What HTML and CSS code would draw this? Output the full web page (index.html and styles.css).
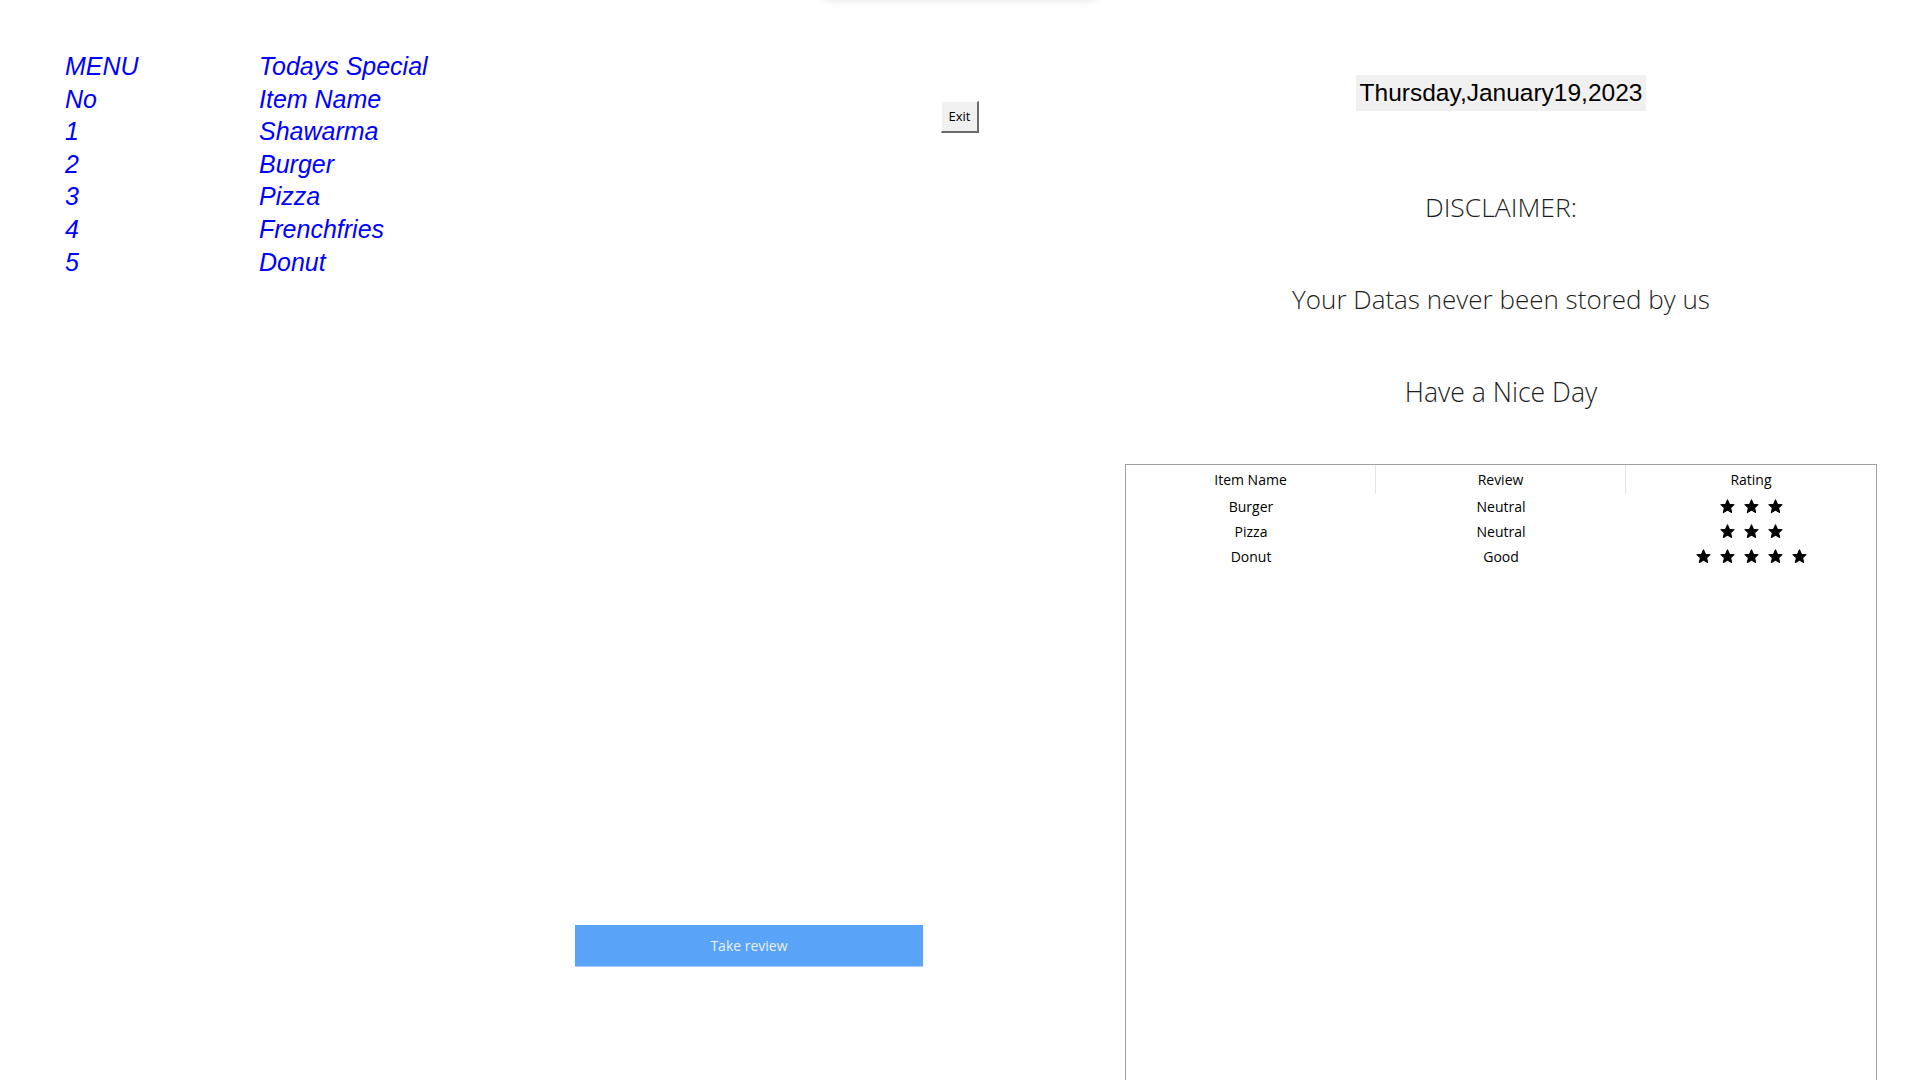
FILE: index.html
```html
<!DOCTYPE html>
<html lang="en">
<head>
<meta charset="utf-8">
<title>Menu</title>
<link rel="stylesheet" href="styles.css">
</head>
<body>
<div class="top-shadow"></div>
<div class="app">
  <section class="left">
    <div class="top">
      <div class="menu">
        <span>MENU</span><span>Todays Special</span>
        <span>No</span><span>Item Name</span>
        <span>1</span><span>Shawarma</span>
        <span>2</span><span>Burger</span>
        <span>3</span><span>Pizza</span>
        <span>4</span><span>Frenchfries</span>
        <span>5</span><span>Donut</span>
      </div>
      <button class="exit">Exit</button>
    </div>
    <button class="review-btn">Take review</button>
  </section>
  <section class="right">
    <div class="date">Thursday,January19,2023</div>
    <div class="msg msg-title">DISCLAIMER:</div>
    <div class="msg msg-first">Your Datas never been stored by us</div>
    <div class="msg msg-last">Have a Nice Day</div>
    <div class="table">
      <div class="thead">
        <div class="th">Item Name</div>
        <div class="th">Review</div>
        <div class="th">Rating</div>
      </div>
      <div class="tr">
        <div class="td">Burger</div>
        <div class="td">Neutral</div>
        <div class="td stars">
          <svg class="star" viewBox="0 0 24 24"><path d="M12 1.5l3.1 6.9 7.4.7-5.6 5 1.7 7.4L12 17.6l-6.6 3.9 1.7-7.4-5.6-5 7.4-.7z"/></svg>
          <svg class="star" viewBox="0 0 24 24"><path d="M12 1.5l3.1 6.9 7.4.7-5.6 5 1.7 7.4L12 17.6l-6.6 3.9 1.7-7.4-5.6-5 7.4-.7z"/></svg>
          <svg class="star" viewBox="0 0 24 24"><path d="M12 1.5l3.1 6.9 7.4.7-5.6 5 1.7 7.4L12 17.6l-6.6 3.9 1.7-7.4-5.6-5 7.4-.7z"/></svg>
        </div>
      </div>
      <div class="tr">
        <div class="td">Pizza</div>
        <div class="td">Neutral</div>
        <div class="td stars">
          <svg class="star" viewBox="0 0 24 24"><path d="M12 1.5l3.1 6.9 7.4.7-5.6 5 1.7 7.4L12 17.6l-6.6 3.9 1.7-7.4-5.6-5 7.4-.7z"/></svg>
          <svg class="star" viewBox="0 0 24 24"><path d="M12 1.5l3.1 6.9 7.4.7-5.6 5 1.7 7.4L12 17.6l-6.6 3.9 1.7-7.4-5.6-5 7.4-.7z"/></svg>
          <svg class="star" viewBox="0 0 24 24"><path d="M12 1.5l3.1 6.9 7.4.7-5.6 5 1.7 7.4L12 17.6l-6.6 3.9 1.7-7.4-5.6-5 7.4-.7z"/></svg>
        </div>
      </div>
      <div class="tr">
        <div class="td">Donut</div>
        <div class="td">Good</div>
        <div class="td stars">
          <svg class="star" viewBox="0 0 24 24"><path d="M12 1.5l3.1 6.9 7.4.7-5.6 5 1.7 7.4L12 17.6l-6.6 3.9 1.7-7.4-5.6-5 7.4-.7z"/></svg>
          <svg class="star" viewBox="0 0 24 24"><path d="M12 1.5l3.1 6.9 7.4.7-5.6 5 1.7 7.4L12 17.6l-6.6 3.9 1.7-7.4-5.6-5 7.4-.7z"/></svg>
          <svg class="star" viewBox="0 0 24 24"><path d="M12 1.5l3.1 6.9 7.4.7-5.6 5 1.7 7.4L12 17.6l-6.6 3.9 1.7-7.4-5.6-5 7.4-.7z"/></svg>
          <svg class="star" viewBox="0 0 24 24"><path d="M12 1.5l3.1 6.9 7.4.7-5.6 5 1.7 7.4L12 17.6l-6.6 3.9 1.7-7.4-5.6-5 7.4-.7z"/></svg>
          <svg class="star" viewBox="0 0 24 24"><path d="M12 1.5l3.1 6.9 7.4.7-5.6 5 1.7 7.4L12 17.6l-6.6 3.9 1.7-7.4-5.6-5 7.4-.7z"/></svg>
        </div>
      </div>
    </div>
  </section>
</div>
</body>
</html>
```
FILE: styles.css
```css
html, body {
  margin: 0;
  padding: 0;
  background: #ffffff;
  width: 1920px;
  height: 1080px;
  overflow: hidden;
}

body {
  position: relative;
  font-family: "Open Sans", "Noto Sans", sans-serif;
}

.top-shadow {
  position: absolute;
  top: -20px;
  left: 822px;
  width: 276px;
  height: 20px;
  border-radius: 0 0 12px 12px;
  box-shadow: 0 1px 8px rgba(0, 0, 0, 0.10);
}

.app {
  display: grid;
  grid-template-columns: 1125px 752px;
  height: 1080px;
}

/* ---------- left ---------- */
.left {
  display: flex;
  flex-direction: column;
  align-items: flex-start;
}

.top {
  display: flex;
  align-items: flex-start;
  padding-top: 50px;
  padding-left: 65px;
}

.menu {
  width: 876px;
  display: grid;
  grid-template-columns: 194px auto;
  font-family: "Liberation Sans", Arial, sans-serif;
  font-style: italic;
  font-size: 25px;
  line-height: 32.6px;
  color: #0000ff;
}

.exit {
  margin-top: 51px;
  width: 38px;
  height: 32px;
  padding: 0 0 2px;
  background: #f0f0f0;
  border-style: solid;
  border-width: 1px 2px 2px 1px;
  border-color: #ffffff #6b6b6b #6b6b6b #ffffff;
  font-family: "Open Sans", "Noto Sans", sans-serif;
  font-size: 13px;
  color: #000;
}

.review-btn {
  margin-top: 647px;
  margin-left: 575px;
  width: 348px;
  height: 42px;
  background: #59a3f8;
  border: none;
  border-bottom: 1px solid #a9cffb;
  color: #e9f1fe;
  font-family: "Open Sans", "Noto Sans", sans-serif;
  font-size: 14px;
  padding: 0;
}

/* ---------- right ---------- */
.right {
  display: flex;
  flex-direction: column;
  align-items: center;
}

.date {
  margin-top: 75px;
  height: 36px;
  line-height: 36px;
  padding: 0 4px;
  background: #f0f0f0;
  font-family: "Liberation Sans", Arial, sans-serif;
  font-size: 24.5px;
  color: #000;
}

.msg {
  margin-top: 53px;
  height: 40px;
  line-height: 40px;
  font-family: "Open Sans", "Noto Sans", sans-serif;
  font-weight: 300;
  font-size: 26px;
  color: #1e1e1e;
  white-space: nowrap;
}

.msg-title {
  margin-top: 76px;
  font-size: 26.5px;
}

.msg-first {
  margin-top: 52px;
}

.msg-last {
  font-size: 26.6px;
}

.table {
  margin-top: 52px;
  width: 752px;
  box-sizing: border-box;
  flex: 1;
  border: 1px solid #a0a0a0;
  border-bottom: none;
  font-family: "Open Sans", "Noto Sans", sans-serif;
  font-size: 14px;
  color: #000;
}

.thead, .tr {
  display: grid;
  grid-template-columns: 1fr 1fr 1fr;
}

.th {
  height: 29px;
  line-height: 29px;
  text-align: center;
  border-right: 1px solid #e5e5e5;
}

.th:last-child {
  border-right: none;
}

.td {
  height: 25px;
  line-height: 25px;
  text-align: center;
}

.stars {
  display: flex;
  justify-content: center;
  align-items: center;
  gap: 9px;
}

.star {
  width: 15px;
  height: 15px;
  fill: #000;
  stroke: #000;
  stroke-width: 1.8;
  stroke-linejoin: round;
}
```
